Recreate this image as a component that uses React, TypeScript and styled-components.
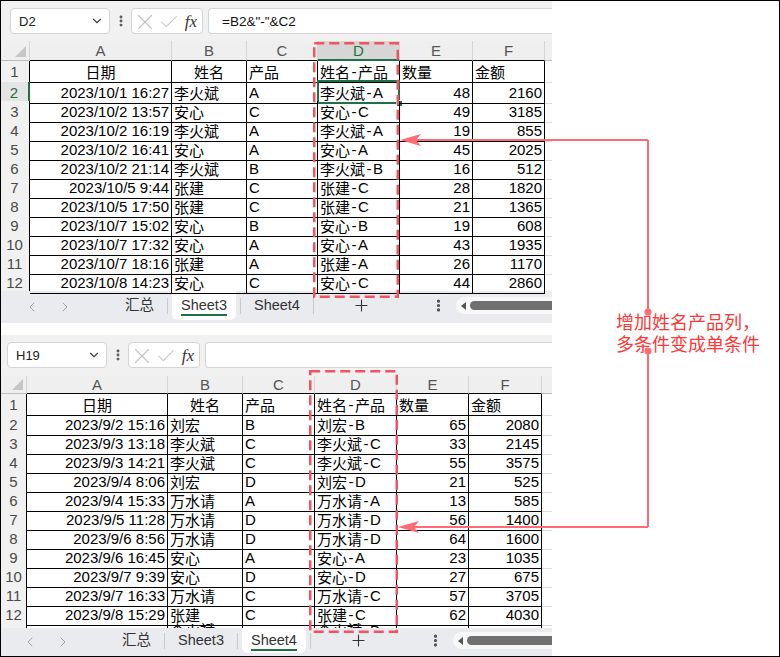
import React from 'react'
import styled, {createGlobalStyle} from 'styled-components'
import {Check, ChevronDown, ChevronLeft, ChevronRight, EllipsisVertical, Plus, X} from 'lucide-react'

const FONT = `"Liberation Sans", "Noto Sans CJK SC", sans-serif`
const GREEN = '#1e7145'
const MARK = '#f4535e'
const LINE = '#ff6b75'

const GlobalStyle = createGlobalStyle`
  html, body {
    margin: 0;
    padding: 0;
    background: #fff;
  }
  body {
    font-family: ${FONT};
  }
`

type Align = 'left' | 'right' | 'center'
type RowData = [string, string, string, string, string, string]

const headAlign: Align[] = ['center', 'center', 'left', 'left', 'left', 'left']
const dataAlign: Align[] = ['right', 'left', 'left', 'left', 'right', 'right']
const headTitles: RowData = ['日期', '姓名', '产品', '姓名-产品', '数量', '金额']
const letters = ['A', 'B', 'C', 'D', 'E', 'F']

const topRows: RowData[] = [
  ['2023/10/1 16:27', '李火斌', 'A', '李火斌-A', '48', '2160'],
  ['2023/10/2 13:57', '安心', 'C', '安心-C', '49', '3185'],
  ['2023/10/2 16:19', '李火斌', 'A', '李火斌-A', '19', '855'],
  ['2023/10/2 16:41', '安心', 'A', '安心-A', '45', '2025'],
  ['2023/10/2 21:14', '李火斌', 'B', '李火斌-B', '16', '512'],
  ['2023/10/5 9:44', '张建', 'C', '张建-C', '28', '1820'],
  ['2023/10/5 17:50', '张建', 'C', '张建-C', '21', '1365'],
  ['2023/10/7 15:02', '安心', 'B', '安心-B', '19', '608'],
  ['2023/10/7 17:32', '安心', 'A', '安心-A', '43', '1935'],
  ['2023/10/7 18:16', '张建', 'A', '张建-A', '26', '1170'],
  ['2023/10/8 14:23', '安心', 'C', '安心-C', '44', '2860'],
]

const bottomRows: RowData[] = [
  ['2023/9/2 15:16', '刘宏', 'B', '刘宏-B', '65', '2080'],
  ['2023/9/3 13:18', '李火斌', 'C', '李火斌-C', '33', '2145'],
  ['2023/9/3 14:21', '李火斌', 'C', '李火斌-C', '55', '3575'],
  ['2023/9/4 8:06', '刘宏', 'D', '刘宏-D', '21', '525'],
  ['2023/9/4 15:33', '万水请', 'A', '万水请-A', '13', '585'],
  ['2023/9/5 11:28', '万水请', 'D', '万水请-D', '56', '1400'],
  ['2023/9/6 8:56', '万水请', 'D', '万水请-D', '64', '1600'],
  ['2023/9/6 16:45', '安心', 'A', '安心-A', '23', '1035'],
  ['2023/9/7 9:39', '安心', 'D', '安心-D', '27', '675'],
  ['2023/9/7 16:33', '万水请', 'C', '万水请-C', '57', '3705'],
  ['2023/9/8 15:29', '张建', 'C', '张建-C', '62', '4030'],
]

// only the tops of the CJK glyphs peek out above the tab bar
const bottomPartial: RowData = ['', '李火斌', '', '李火斌-B', '', '']

const Frame = styled.div`
  position: relative;
  box-sizing: border-box;
  width: 780px;
  height: 657px;
  border: 1px solid #000;
  display: flex;
  background: #fff;
  overflow: hidden;
`

const Shots = styled.div`
  flex: none;
  width: 551px;
  display: flex;
  flex-direction: column;
  gap: 12px;
`

const Window = styled.div<{$bleed?: boolean; $h: number}>`
  position: relative;
  flex: none;
  height: ${p => p.$h}px;
  width: ${p => (p.$bleed ? 552 : 551)}px;
  margin: ${p => (p.$bleed ? '-1px 0 0 -1px' : '0')};
  display: flex;
  flex-direction: column;
  overflow: hidden;
  background: #fff;
  font-family: ${FONT};
`

const FormulaBar = styled.div<{$top: number; $left: number}>`
  flex: none;
  height: 41px;
  box-sizing: border-box;
  padding: ${p => p.$top}px 0 0 ${p => p.$left}px;
  background: #f1f1f1;
  display: flex;
  align-items: flex-start;
`

const NameBox = styled.div`
  box-sizing: border-box;
  width: 100px;
  height: 26px;
  padding: 0 5px 0 8px;
  display: flex;
  align-items: center;
  justify-content: space-between;
  background: #fff;
  border: 1px solid #d4d4d4;
  border-radius: 4px;
  font-size: 13px;
  color: #222;
`

const BarDots = styled.div`
  width: 21px;
  height: 26px;
  display: flex;
  align-items: center;
  justify-content: center;
  color: #555;
`

const FxBox = styled.div`
  box-sizing: border-box;
  width: 72px;
  height: 26px;
  display: grid;
  grid-template-columns: 26px 22px 22px;
  align-items: center;
  justify-items: center;
  background: #fff;
  border: 1px solid #d4d4d4;
  border-radius: 4px;
  color: #c2c2c2;
`

const Fx = styled.span`
  font-family: "Liberation Serif", serif;
  font-style: italic;
  font-size: 17px;
  color: #333;
`

const FormulaInput = styled.div`
  box-sizing: border-box;
  flex: 1;
  height: 26px;
  margin-left: 5px;
  padding-left: 13px;
  display: flex;
  align-items: center;
  background: #fff;
  border: 1px solid #d4d4d4;
  border-right: none;
  border-radius: 4px 0 0 4px;
  font-size: 13.5px;
  color: #111;
`

const Row = styled.div<{$cols: string; $h: number; $clip?: boolean}>`
  flex: none;
  display: grid;
  grid-template-columns: ${p => p.$cols};
  height: ${p => p.$h}px;
  overflow: ${p => (p.$clip ? 'hidden' : 'visible')};
  font-size: 15px;
`

const Corner = styled.div`
  position: relative;
  box-sizing: border-box;
  background: #efefef;
  border-right: 1px solid #d5d5d5;
  border-bottom: 1px solid #bdbdbd;

  &::after {
    content: '';
    position: absolute;
    right: 3px;
    bottom: 3px;
    width: 0;
    height: 0;
    border-left: 11px solid transparent;
    border-bottom: 11px solid #c6c6c6;
  }
`

const HeadCell = styled.div<{$sel?: boolean; $outside?: boolean}>`
  box-sizing: border-box;
  display: flex;
  align-items: center;
  justify-content: center;
  background: ${p => (p.$sel ? '#d6d6d6' : '#efefef')};
  color: ${p => (p.$sel ? GREEN : '#555')};
  border-right: ${p => (p.$outside ? 'none' : '1px solid #d5d5d5')};
  border-bottom: ${p =>
    p.$sel ? `2px solid ${GREEN}` : p.$outside ? '1px solid #bdbdbd' : '1px solid #000'};
`

const RowHead = styled.div<{$sel?: boolean}>`
  box-sizing: border-box;
  display: flex;
  align-items: center;
  justify-content: center;
  background: ${p => (p.$sel ? '#e4e4e4' : '#f1f1f1')};
  color: ${p => (p.$sel ? GREEN : '#4a4a4a')};
  border-bottom: 1px solid #d6d6d6;
  border-right: ${p => (p.$sel ? `2px solid ${GREEN}` : '1px solid #000')};
`

const Cell = styled.div<{$align: Align; $partial?: boolean}>`
  position: relative;
  box-sizing: border-box;
  display: flex;
  align-items: ${p => (p.$partial ? 'flex-start' : 'center')};
  justify-content: ${p =>
    p.$align === 'right' ? 'flex-end' : p.$align === 'center' ? 'center' : 'flex-start'};
  padding: ${p => (p.$partial ? '1px 2px 0' : '0 2px')};
  line-height: ${p => (p.$partial ? '14px' : 'normal')};
  white-space: nowrap;
  color: #000;
  border-right: 1px solid #000;
  border-bottom: ${p => (p.$partial ? 'none' : '1px solid #000')};
`

const Hyphen = styled.span`
  margin: 0 1.5px;
`

const OutsideCell = styled.div`
  box-sizing: border-box;
  border-bottom: 1px solid #dadada;
`

const Selection = styled.div`
  position: absolute;
  top: -2px;
  left: -1px;
  right: -1px;
  bottom: -1px;
  border: 2px solid ${GREEN};
  pointer-events: none;

  &::after {
    content: '';
    position: absolute;
    right: -5px;
    bottom: -5px;
    width: 5px;
    height: 5px;
    background: ${GREEN};
    border: 1px solid #fff;
  }
`

const TabBar = styled.div<{$h: number; $indent: number}>`
  flex: none;
  height: ${p => p.$h}px;
  box-sizing: border-box;
  padding-left: ${p => p.$indent}px;
  display: flex;
  align-items: stretch;
  background: #e9ebee;
  font-size: 14.5px;
  color: #333;
`

const NavGroup = styled.div<{$after: number}>`
  display: flex;
  align-items: center;
  gap: 13px;
  margin-right: ${p => p.$after}px;
`

const NavBtn = styled.span`
  width: 20px;
  display: flex;
  justify-content: center;
  color: #9a9a9a;
`

const Tab = styled.div<{$active?: boolean}>`
  margin: 0 4px 3px;
  padding: 0 9px;
  display: flex;
  align-items: center;
  background: ${p => (p.$active ? '#fff' : 'transparent')};
  border-radius: 0 0 6px 6px;
`

const TabLabel = styled.span<{$active?: boolean}>`
  line-height: 18px;
  border-bottom: 2px solid ${p => (p.$active ? GREEN : 'transparent')};
`

const TabSep = styled.span`
  align-self: center;
  width: 1px;
  height: 16px;
  margin-bottom: 3px;
  background: #c9c9c9;
`

const AddTab = styled.div`
  width: 96px;
  display: flex;
  align-items: center;
  justify-content: center;
  color: #333;
  padding-bottom: 3px;
`

const MoreBtn = styled.div`
  width: 20px;
  margin-left: 19px;
  display: flex;
  align-items: center;
  justify-content: center;
  color: #444;
  padding-bottom: 3px;
`

const ScrollTrack = styled.div`
  flex: 1;
  align-self: center;
  height: 17px;
  margin: 0 0 3px 7px;
  padding-left: 5px;
  display: flex;
  align-items: center;
  background: #f8f8f9;
  border-radius: 9px 0 0 9px;
`

const ScrollArrow = styled.span`
  width: 0;
  height: 0;
  border-top: 4px solid transparent;
  border-bottom: 4px solid transparent;
  border-right: 5px solid #555;
`

const ScrollThumb = styled.span`
  flex: 1;
  height: 9px;
  margin-left: 4px;
  background: #707070;
  border-radius: 5px 0 0 5px;
`

const DashSvg = styled.svg<{$x: number; $y: number}>`
  position: absolute;
  left: ${p => p.$x}px;
  top: ${p => p.$y}px;
  pointer-events: none;
`

const Note = styled.div`
  flex: 1;
  box-sizing: border-box;
  padding: 309px 0 0 64px;
  font-family: "Noto Sans CJK SC", sans-serif;
  font-size: 18px;
  line-height: 22px;
  color: #ff3636;
  white-space: nowrap;
`

const Connector = styled.svg`
  position: absolute;
  left: -1px;
  top: -1px;
  pointer-events: none;
`

type Mark = {x: number; y: number; w: number; h: number}

const DashMark = ({x, y, w, h}: Mark) => (
  <DashSvg $x={x} $y={y} width={w} height={h}>
    <rect
      x={1.25}
      y={1.25}
      width={w - 2.5}
      height={h - 2.5}
      fill="none"
      stroke={MARK}
      strokeWidth={2.5}
      strokeDasharray="10 5"
    />
  </DashSvg>
)

// the sheet font sets a little air around the hyphen of "姓名-产品"
const withHyphen = (v: string) => {
  const i = v.indexOf('-')
  if (i < 0) return v
  return (
    <>
      {v.slice(0, i)}
      <Hyphen>-</Hyphen>
      {v.slice(i + 1)}
    </>
  )
}

type SheetProps = {
  bleed?: boolean
  height: number
  barTop: number
  barLeft: number
  nameBox: string
  formula: string
  cols: string
  headH: number
  firstH: number
  rows: RowData[]
  partial?: RowData
  partialH?: number
  selectD2?: boolean
  tabH: number
  indent: number
  navAfter: number
  active: 'Sheet3' | 'Sheet4'
  mark: Mark
}

const Sheet = (props: SheetProps) => {
  const {rows, cols, selectD2, active} = props

  return (
    <Window $bleed={props.bleed} $h={props.height}>
      <FormulaBar $top={props.barTop} $left={props.barLeft}>
        <NameBox>
          {props.nameBox}
          <ChevronDown size={14} strokeWidth={2} color="#444" />
        </NameBox>
        <BarDots>
          <EllipsisVertical size={14} strokeWidth={3} />
        </BarDots>
        <FxBox>
          <X size={26} strokeWidth={1} />
          <Check size={22} strokeWidth={1.1} />
          <Fx>fx</Fx>
        </FxBox>
        <FormulaInput>{props.formula}</FormulaInput>
      </FormulaBar>

      <Row $cols={cols} $h={props.headH}>
        <Corner />
        {letters.map(l => (
          <HeadCell key={l} $sel={selectD2 && l === 'D'}>
            {l}
          </HeadCell>
        ))}
        <HeadCell $outside />
      </Row>

      <Row $cols={cols} $h={props.firstH}>
        <RowHead>1</RowHead>
        {headTitles.map((t, i) => (
          <Cell key={t} $align={headAlign[i]}>
            {withHyphen(t)}
          </Cell>
        ))}
        <OutsideCell />
      </Row>

      {rows.map((r, ri) => (
        <Row key={ri} $cols={cols} $h={19}>
          <RowHead $sel={selectD2 && ri === 0}>{ri + 2}</RowHead>
          {r.map((v, ci) => (
            <Cell key={ci} $align={dataAlign[ci]}>
              {withHyphen(v)}
              {selectD2 && ri === 0 && ci === 3 && <Selection />}
            </Cell>
          ))}
          <OutsideCell />
        </Row>
      ))}

      {props.partial && (
        <Row $cols={cols} $h={props.partialH ?? 5} $clip>
          <RowHead />
          {props.partial.map((v, ci) => (
            <Cell key={ci} $align={dataAlign[ci]} $partial>
              {withHyphen(v)}
            </Cell>
          ))}
          <OutsideCell />
        </Row>
      )}

      <TabBar $h={props.tabH} $indent={props.indent}>
        <NavGroup $after={props.navAfter}>
          <NavBtn>
            <ChevronLeft size={16} strokeWidth={1.4} />
          </NavBtn>
          <NavBtn>
            <ChevronRight size={16} strokeWidth={1.4} />
          </NavBtn>
        </NavGroup>
        <Tab>
          <TabLabel>汇总</TabLabel>
        </Tab>
        <TabSep />
        <Tab $active={active === 'Sheet3'}>
          <TabLabel $active={active === 'Sheet3'}>Sheet3</TabLabel>
        </Tab>
        <TabSep />
        <Tab $active={active === 'Sheet4'}>
          <TabLabel $active={active === 'Sheet4'}>Sheet4</TabLabel>
        </Tab>
        <TabSep />
        <AddTab>
          <Plus size={19} strokeWidth={1.4} />
        </AddTab>
        <MoreBtn>
          <EllipsisVertical size={15} strokeWidth={3} />
        </MoreBtn>
        <ScrollTrack>
          <ScrollArrow />
          <ScrollThumb />
        </ScrollTrack>
      </TabBar>

      <DashMark {...props.mark} />
    </Window>
  )
}

export default function App() {
  return (
    <>
      <GlobalStyle />
      <Frame>
        <Shots>
          <Sheet
            bleed
            height={323}
            barTop={8}
            barLeft={10}
            nameBox="D2"
            formula={'=B2&"-"&C2'}
            cols="30px 142px 75px 71px 82px 73px 72px 1fr"
            headH={20}
            firstH={21}
            rows={topRows}
            selectD2
            tabH={32}
            indent={22}
            navAfter={37}
            active="Sheet3"
            mark={{x: 313, y: 42, w: 86, h: 256}}
          />
          <Sheet
            height={321}
            barTop={7}
            barLeft={6}
            nameBox="H19"
            formula=""
            cols="26px 141px 75px 72px 82px 72px 73px 1fr"
            headH={18}
            firstH={20}
            rows={bottomRows}
            partial={bottomPartial}
            partialH={5}
            tabH={28}
            indent={19}
            navAfter={36}
            active="Sheet4"
            mark={{x: 308, y: 35, w: 89, h: 263}}
          />
        </Shots>
        <Note>
          增加姓名产品列，
          <br />
          多条件变成单条件
        </Note>
        <Connector width={780} height={657} viewBox="0 0 780 657">
          <path
            d="M648 140 V312 M648 351 V527 M416 140 H648 M414 527 H648"
            fill="none"
            stroke={LINE}
            strokeWidth={2}
          />
          <path d="M400 140 L421 134 L416 140 L421 146 Z" fill={LINE} />
          <path d="M398 527 L419 521 L414 527 L419 533 Z" fill={LINE} />
          <circle cx={648} cy={312} r={3.5} fill={LINE} />
          <circle cx={648} cy={351} r={3.5} fill={LINE} />
        </Connector>
      </Frame>
    </>
  )
}
